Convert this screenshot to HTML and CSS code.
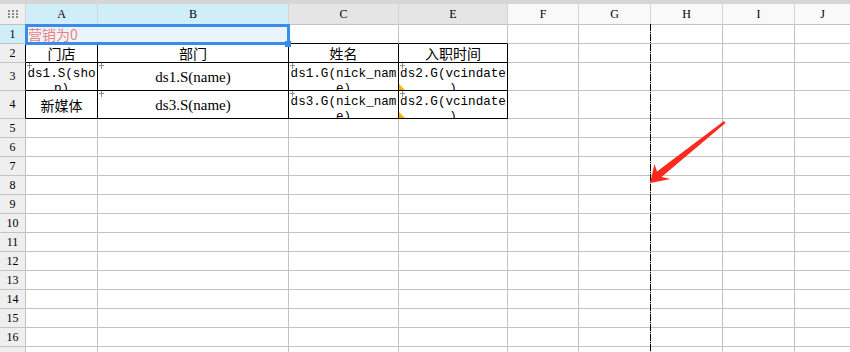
FILE: index.html
```html
<!DOCTYPE html>
<html lang="zh-CN">
<head>
  <meta charset="UTF-8" />
  <title>报表设计</title>
  <link rel="stylesheet" href="styles.css">
</head>
<body>
  <div class="app">
    <div class="topbar"></div>
    <div class="sheet">
      <div class="row">
        <div class="c hd corner">
          <svg width="10" height="8" viewBox="0 0 10 8"><g fill="#8c8c8c"><rect x="0" y="0" width="2" height="2"/><rect x="4" y="0" width="2" height="2"/><rect x="8" y="0" width="2" height="2"/><rect x="0" y="3" width="2" height="2"/><rect x="4" y="3" width="2" height="2"/><rect x="8" y="3" width="2" height="2"/><rect x="0" y="6" width="2" height="2"/><rect x="4" y="6" width="2" height="2"/><rect x="8" y="6" width="2" height="2"/></g></svg>
        </div>
        <div class="c hd on">A</div>
        <div class="c hd on">B</div>
        <div class="c hd used">C</div>
        <div class="c hd used">E</div>
        <div class="c hd">F</div>
        <div class="c hd">G</div>
        <div class="c hd">H</div>
        <div class="c hd">I</div>
        <div class="c hd">J</div>
      </div>

      <div class="row">
        <div class="c rh on">1</div>
        <div class="c bb merged picked">营销为0</div>
        <div class="c bb"></div>
        <div class="c bb"></div>
        <div class="c"></div><div class="c"></div><div class="c"></div><div class="c"></div><div class="c"></div>
      </div>

      <div class="row">
        <div class="c rh br">2</div>
        <div class="c br bb t">门店</div>
        <div class="c br bb t">部门</div>
        <div class="c br bb t">姓名</div>
        <div class="c br bb t">入职时间</div>
        <div class="c"></div><div class="c"></div><div class="c"></div><div class="c"></div><div class="c"></div>
      </div>

      <div class="row tall">
        <div class="c rh br">3</div>
        <div class="c br bb f"><span class="mark"></span>ds1.S(shop)</div>
        <div class="c br bb s"><span class="mark"></span>ds1.S(name)</div>
        <div class="c br bb f"><span class="mark"></span>ds1.G(nick_name)</div>
        <div class="c br bb f flag"><span class="mark"></span>ds2.G(vcindate)</div>
        <div class="c"></div><div class="c"></div><div class="c"></div><div class="c"></div><div class="c"></div>
      </div>

      <div class="row tall">
        <div class="c rh br">4</div>
        <div class="c br bb t">新媒体</div>
        <div class="c br bb s"><span class="mark"></span>ds3.S(name)</div>
        <div class="c br bb f"><span class="mark"></span>ds3.G(nick_name)</div>
        <div class="c br bb f flag"><span class="mark"></span>ds2.G(vcindate)</div>
        <div class="c"></div><div class="c"></div><div class="c"></div><div class="c"></div><div class="c"></div>
      </div>

      <div class="row"><div class="c rh">5</div><div class="c"></div><div class="c"></div><div class="c"></div><div class="c"></div><div class="c"></div><div class="c"></div><div class="c"></div><div class="c"></div><div class="c"></div></div>
      <div class="row"><div class="c rh">6</div><div class="c"></div><div class="c"></div><div class="c"></div><div class="c"></div><div class="c"></div><div class="c"></div><div class="c"></div><div class="c"></div><div class="c"></div></div>
      <div class="row"><div class="c rh">7</div><div class="c"></div><div class="c"></div><div class="c"></div><div class="c"></div><div class="c"></div><div class="c"></div><div class="c"></div><div class="c"></div><div class="c"></div></div>
      <div class="row"><div class="c rh">8</div><div class="c"></div><div class="c"></div><div class="c"></div><div class="c"></div><div class="c"></div><div class="c"></div><div class="c"></div><div class="c"></div><div class="c"></div></div>
      <div class="row"><div class="c rh">9</div><div class="c"></div><div class="c"></div><div class="c"></div><div class="c"></div><div class="c"></div><div class="c"></div><div class="c"></div><div class="c"></div><div class="c"></div></div>
      <div class="row"><div class="c rh">10</div><div class="c"></div><div class="c"></div><div class="c"></div><div class="c"></div><div class="c"></div><div class="c"></div><div class="c"></div><div class="c"></div><div class="c"></div></div>
      <div class="row"><div class="c rh">11</div><div class="c"></div><div class="c"></div><div class="c"></div><div class="c"></div><div class="c"></div><div class="c"></div><div class="c"></div><div class="c"></div><div class="c"></div></div>
      <div class="row"><div class="c rh">12</div><div class="c"></div><div class="c"></div><div class="c"></div><div class="c"></div><div class="c"></div><div class="c"></div><div class="c"></div><div class="c"></div><div class="c"></div></div>
      <div class="row"><div class="c rh">13</div><div class="c"></div><div class="c"></div><div class="c"></div><div class="c"></div><div class="c"></div><div class="c"></div><div class="c"></div><div class="c"></div><div class="c"></div></div>
      <div class="row"><div class="c rh">14</div><div class="c"></div><div class="c"></div><div class="c"></div><div class="c"></div><div class="c"></div><div class="c"></div><div class="c"></div><div class="c"></div><div class="c"></div></div>
      <div class="row"><div class="c rh">15</div><div class="c"></div><div class="c"></div><div class="c"></div><div class="c"></div><div class="c"></div><div class="c"></div><div class="c"></div><div class="c"></div><div class="c"></div></div>
      <div class="row"><div class="c rh">16</div><div class="c"></div><div class="c"></div><div class="c"></div><div class="c"></div><div class="c"></div><div class="c"></div><div class="c"></div><div class="c"></div><div class="c"></div></div>
      <div class="row"><div class="c rh">17</div><div class="c"></div><div class="c"></div><div class="c"></div><div class="c"></div><div class="c"></div><div class="c"></div><div class="c"></div><div class="c"></div><div class="c"></div></div>
    </div>

    <!-- page break line -->
    <div class="pagebreak"></div>

    <svg class="arrow" width="850" height="352" viewBox="0 0 850 352">
      <polygon points="724,121 657,171.5 654.5,164 650,183 670.5,179 661.5,177 725.5,123" fill="#fa2a1c"/>
    </svg>
  </div>
</body>
</html>
```

FILE: styles.css
```css
body {
  margin: 0;
  background: #fff;
  font-family: 'Liberation Serif', serif;
  color: #000;
  overflow: hidden;
}
.app {
  position: relative;
  width: 850px;
  height: 352px;
  overflow: hidden;
}
.topbar {
  height: 4px;
  background: #d6d6d6;
}
.sheet {
  display: grid;
  grid-template-columns: 26px 72px 191px 110px 109px 71px 72px 72px 72px 56px;
  grid-template-rows: 21px 19px 19px 28px 28px repeat(13, 19px);
}
.row {
  display: contents;
}
.c {
  position: relative;
  box-sizing: border-box;
  border-right: 1px solid #c3c3c3;
  border-bottom: 1px solid #c3c3c3;
  overflow: hidden;
}
.br {
  border-right-color: #000;
}
.bb {
  border-bottom-color: #000;
}

/* headers */
.hd {
  display: flex;
  align-items: center;
  justify-content: center;
  background: #f9f9f9;
  border-right-color: #d4d4d4;
  border-bottom-color: #c3c3c3;
  font-size: 12px;
}
.hd.corner {
  background: #efefef;
}
.hd.on {
  background: #cfeefa;
}
.hd.used {
  background: #e5e5e5;
}
.rh {
  display: flex;
  align-items: center;
  justify-content: center;
  background: #efefef;
  font-size: 12px;
}
.rh.on {
  background: #cfeefa;
}

/* cells */
.t {
  display: flex;
  align-items: center;
  justify-content: center;
  font-family: 'Noto Sans CJK SC', sans-serif;
  font-size: 14px;
}
.s {
  display: flex;
  align-items: center;
  justify-content: center;
  font-size: 15px;
  padding-top: 2px;
}
.f {
  font-family: 'Liberation Mono', monospace;
  font-size: 12.6px;
  line-height: 15px;
  text-align: center;
  word-break: break-all;
  line-break: anywhere;
  padding-top: 4px;
}
.mark {
  position: absolute;
  left: 1px;
  top: 0;
  width: 5px;
  height: 6px;
  background:
    linear-gradient(#8f8f8f, #8f8f8f) 2px 0 / 1px 6px no-repeat,
    linear-gradient(#8f8f8f, #8f8f8f) 0 2px / 5px 1px no-repeat;
}
.flag::after {
  content: "";
  position: absolute;
  left: 0;
  bottom: 0;
  border-bottom: 6px solid #f4b400;
  border-right: 6px solid transparent;
}

/* selected range A1:B1 */
.merged {
  grid-column: span 2;
  display: flex;
  align-items: center;
  padding-left: 2px;
  font-family: 'Noto Sans CJK SC', sans-serif;
  font-size: 14px;
  color: #f07d7d;
}
.picked {
  background: #eaf4fd;
  overflow: visible;
  z-index: 2;
}
.picked::before {
  content: "";
  position: absolute;
  left: -1px;
  top: -1px;
  right: -2px;
  bottom: -2px;
  border: 3px solid #3a8cec;
}
.picked::after {
  content: "";
  position: absolute;
  right: -3px;
  bottom: -4px;
  width: 6px;
  height: 6px;
  background: #3a8cec;
}

.pagebreak {
  position: absolute;
  left: 650px;
  top: 24px;
  bottom: 0;
  width: 1px;
  background: repeating-linear-gradient(to bottom, #000 0 7px, transparent 7px 8px, #000 8px 9px, transparent 9px 10px);
}
.arrow {
  position: absolute;
  left: 0;
  top: 0;
  pointer-events: none;
}
```
